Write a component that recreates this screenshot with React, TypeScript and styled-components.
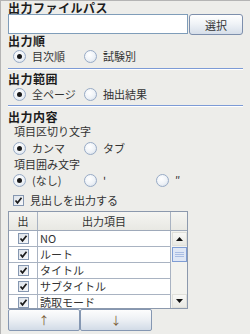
import React from 'react';
import styled, { createGlobalStyle } from 'styled-components';

const GlobalStyle = createGlobalStyle`
  html, body {
    margin: 0;
    padding: 0;
    background: #ededea;
  }
  * {
    box-sizing: border-box;
  }
`;

const font = `"Noto Sans CJK JP", "Noto Sans", sans-serif`;

const items = ['NO', 'ルート', 'タイトル', 'サブタイトル', '読取モード'];

const Radio = ({ label, checked, width }: { label: string; checked?: boolean; width?: number }) => (
  <Option $width={width}>
    <RadioDot $checked={checked} />
    <span>{label}</span>
  </Option>
);

const Check = () => (
  <CheckBox>
    <svg width="9" height="9" viewBox="0 0 9 9">
      <path d="M1.5 4.5 L3.5 6.8 L7.5 1.8" fill="none" stroke="#1b1b1b" strokeWidth="1.7" />
    </svg>
  </CheckBox>
);

const App = (): JSX.Element => {
  return (
    <>
      <GlobalStyle />
      <Panel>
        <Heading>出力ファイルパス</Heading>
        <PathRow>
          <TextField />
          <SelectButton>選択</SelectButton>
        </PathRow>

        <Heading $top={-1}>出力順</Heading>
        <OptionRow $top={2}>
          <Radio label="目次順" checked width={71} />
          <Radio label="試験別" />
        </OptionRow>
        <Separator $top={4} />

        <Heading $top={2}>出力範囲</Heading>
        <OptionRow $top={2}>
          <Radio label="全ページ" checked width={71} />
          <Radio label="抽出結果" />
        </OptionRow>
        <Separator $top={3} />

        <Heading $top={3}>出力内容</Heading>
        <SubLabel $top={2}>項目区切り文字</SubLabel>
        <OptionRow $top={3}>
          <Radio label="カンマ" checked width={71} />
          <Radio label="タブ" />
        </OptionRow>
        <SubLabel $top={2}>項目囲み文字</SubLabel>
        <OptionRow $top={2}>
          <Radio label="(なし)" checked width={71} />
          <Radio label="'" width={72} />
          <Radio label="″" />
        </OptionRow>
        <OptionRow $top={5}>
          <Option>
            <Check />
            <span>見出しを出力する</span>
          </Option>
        </OptionRow>

        <Table>
          <HeaderRow>
            <HeadCell $w={29}>出</HeadCell>
            <HeadCell $w={133}>出力項目</HeadCell>
            <Corner />
          </HeaderRow>
          <Body>
            <Rows>
              {items.map((name) => (
                <Row key={name}>
                  <CheckCell>
                    <Check />
                  </CheckCell>
                  <NameCell>{name}</NameCell>
                </Row>
              ))}
            </Rows>
            <ScrollBar>
              <ScrollButton>
                <svg width="7" height="4" viewBox="0 0 7 4">
                  <path d="M0 4 L3.5 0 L7 4 Z" fill="#111" />
                </svg>
              </ScrollButton>
              <Thumb>
                <Grip />
                <Grip />
                <Grip />
              </Thumb>
              <Track />
              <ScrollButton>
                <svg width="7" height="4" viewBox="0 0 7 4">
                  <path d="M0 0 L7 0 L3.5 4 Z" fill="#111" />
                </svg>
              </ScrollButton>
            </ScrollBar>
          </Body>
        </Table>

        <MoveRow>
          <MoveButton>↑</MoveButton>
          <MoveButton>↓</MoveButton>
        </MoveRow>
      </Panel>
    </>
  );
};

const Panel = styled.div`
  width: 250px;
  height: 334px;
  overflow: hidden;
  background: #ededea;
  border-top: 1px solid #b4b4b4;
  border-left: 1px solid #b4b4b4;
  padding: 0 7px 0 7px;
  display: flex;
  flex-direction: column;
  font-family: ${font};
  color: #333;
`;

const Heading = styled.div<{ $top?: number }>`
  height: 13px;
  line-height: 13px;
  margin-top: ${(p) => p.$top ?? 0}px;
  font-size: 12px;
  font-weight: bold;
  letter-spacing: 0.5px;
  color: #1c1c1c;
  white-space: nowrap;
`;

const SubLabel = styled.div<{ $top?: number }>`
  height: 13px;
  line-height: 13px;
  margin-top: ${(p) => p.$top ?? 0}px;
  padding-left: 6px;
  font-size: 11px;
  color: #333;
  white-space: nowrap;
`;

const PathRow = styled.div`
  display: flex;
  align-items: flex-start;
  gap: 1px;
  height: 21px;
`;

const TextField = styled.div`
  flex: 1;
  height: 20px;
  background: #fff;
  border: 1px solid #7f9db9;
`;

const SelectButton = styled.button`
  width: 54px;
  height: 21px;
  padding: 0;
  border: 1px solid #7d8fac;
  border-radius: 3px;
  background: linear-gradient(#ffffff, #f0f3f7 45%, #d6dee9);
  font-family: ${font};
  font-size: 11px;
  color: #333;
`;

const OptionRow = styled.div<{ $top?: number }>`
  display: flex;
  align-items: center;
  height: 15px;
  margin-top: ${(p) => p.$top ?? 0}px;
  padding-left: 5px;
`;

const Option = styled.label<{ $width?: number }>`
  display: flex;
  align-items: center;
  gap: 6px;
  width: ${(p) => (p.$width ? `${p.$width}px` : 'auto')};
  font-size: 11px;
  line-height: 15px;
  color: #333;
  white-space: nowrap;
`;

const RadioDot = styled.span<{ $checked?: boolean }>`
  position: relative;
  width: 13px;
  height: 13px;
  flex: none;
  border-radius: 50%;
  border: 1px solid #98abc6;
  background: radial-gradient(circle at 40% 35%, #ffffff 0%, #eef2f7 55%, #cdd7e4 100%);
  &::after {
    content: '';
    display: ${(p) => (p.$checked ? 'block' : 'none')};
    position: absolute;
    left: 3px;
    top: 3px;
    width: 5px;
    height: 5px;
    border-radius: 50%;
    background: #1a1a1a;
  }
`;

const CheckBox = styled.span`
  width: 11px;
  height: 11px;
  flex: none;
  display: flex;
  align-items: center;
  justify-content: center;
  border: 1px solid #8597b1;
  background: linear-gradient(135deg, #dde3ea, #f7f8fa);
`;

const Separator = styled.div<{ $top?: number }>`
  height: 2px;
  margin-top: ${(p) => p.$top ?? 0}px;
  border-top: 1px solid #7d9bd6;
  border-bottom: 1px solid #ffffff;
`;

const Table = styled.div`
  width: 180px;
  height: 98px;
  margin-top: 3px;
  border: 1px solid #8c99ad;
  background: #fff;
  display: flex;
  flex-direction: column;
  overflow: hidden;
`;

const HeaderRow = styled.div`
  display: flex;
  height: 19px;
  flex: none;
  background: linear-gradient(#f5f5f2, #e8e8e3);
  border-bottom: 1px solid #9ea9ba;
`;

const HeadCell = styled.div<{ $w: number }>`
  width: ${(p) => p.$w}px;
  border-right: 1px solid #a9b3c2;
  text-align: center;
  font-size: 11px;
  line-height: 18px;
  color: #333;
`;

const Corner = styled.div`
  flex: 1;
`;

const Body = styled.div`
  display: flex;
  flex: 1;
  min-height: 0;
`;

const Rows = styled.div`
  width: 162px;
  overflow: hidden;
`;

const Row = styled.div`
  display: flex;
  height: 16px;
  border-bottom: 1px solid #a9b3c2;
`;

const CheckCell = styled.div`
  width: 29px;
  display: flex;
  align-items: center;
  justify-content: center;
  border-right: 1px solid #a9b3c2;
`;

const NameCell = styled.div`
  width: 133px;
  padding-left: 2px;
  border-right: 1px solid #a9b3c2;
  font-size: 11px;
  line-height: 15px;
  color: #333;
  white-space: nowrap;
`;

const ScrollBar = styled.div`
  flex: 1;
  display: flex;
  flex-direction: column;
  align-items: center;
  background: #f3f3ef;
`;

const ScrollButton = styled.div`
  width: 15px;
  height: 14px;
  margin-top: 1px;
  display: flex;
  align-items: center;
  justify-content: center;
  background: linear-gradient(#f8f8f6, #e9e9e4);
  border: 1px solid #e0e0da;
`;

const Thumb = styled.div`
  width: 15px;
  height: 15px;
  margin-top: 1px;
  display: flex;
  flex-direction: column;
  align-items: center;
  justify-content: center;
  gap: 1px;
  border: 1px solid #7f9dd4;
  background: #dfe7f5;
`;

const Grip = styled.div`
  width: 9px;
  height: 1px;
  background: #a9bde3;
`;

const Track = styled.div`
  flex: 1;
`;

const MoveRow = styled.div`
  display: flex;
  margin-top: 0;
`;

const MoveButton = styled.button`
  width: 72px;
  height: 22px;
  padding: 0;
  border: 1px solid #8597b2;
  border-radius: 2px;
  background: linear-gradient(#fdfdfd, #eef1f5 45%, #d2dbe7);
  font-family: ${font};
  font-size: 11px;
  color: #7a5a34;
`;

export default App;
